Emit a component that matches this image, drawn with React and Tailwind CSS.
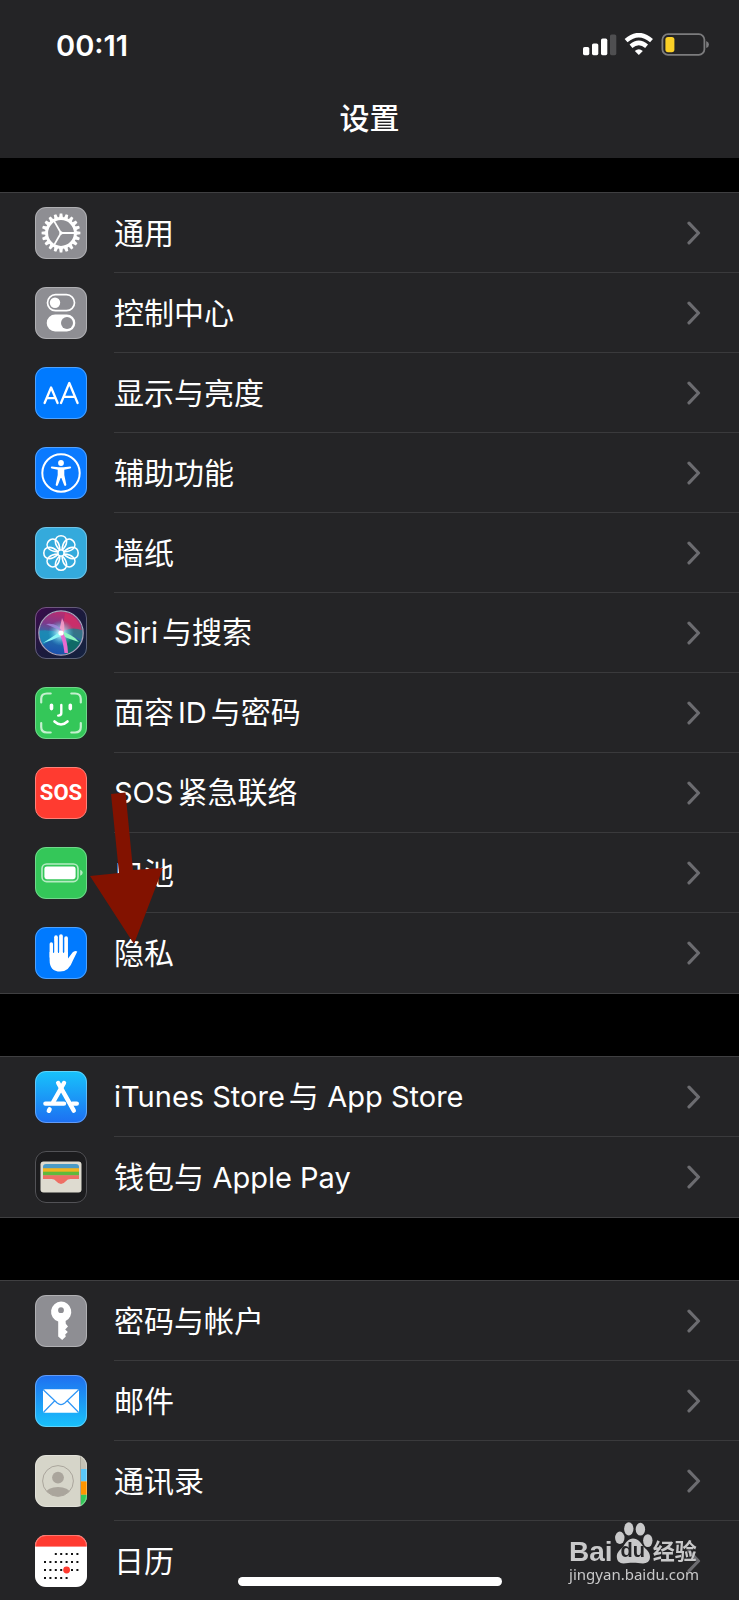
import React from "react";

const tile = "h-[52px] w-[52px] shrink-0";
const P = (a, r, cx = 26, cy = 26) => [
  +(cx + r * Math.cos((a * Math.PI) / 180)).toFixed(2),
  +(cy + r * Math.sin((a * Math.PI) / 180)).toFixed(2),
];

function Tile({ id, fill, stroke = "rgba(255,255,255,.3)", children }) {
  return (
    <svg viewBox="0 0 52 52" className={tile} aria-hidden="true">
      <defs>
        <clipPath id={`${id}-clip`}>
          <rect width="52" height="52" rx="11" />
        </clipPath>
      </defs>
      <g clipPath={`url(#${id}-clip)`}>
        <rect width="52" height="52" fill={fill} />
        {children}
      </g>
      <rect x=".5" y=".5" width="51" height="51" rx="10.5" fill="none" stroke={stroke} />
    </svg>
  );
}

function GearIcon() {
  const teeth = Array.from({ length: 20 }, (_, i) => i * 18);
  return (
    <Tile id="gear" fill="#8e8e93">
      <g fill="none" stroke="#fff">
        <circle cx="26" cy="26" r="14.4" strokeWidth="3" />
        {[0, 120, 240].map((a) => {
          const [x, y] = P(a, 14);
          return <line key={a} x1="26" y1="26" x2={x} y2={y} strokeWidth="1.8" />;
        })}
      </g>
      {teeth.map((a) => (
        <path key={a} d="M40 23.9 L45.4 24.7 V27.3 L40 28.1 Z" fill="#fff" transform={`rotate(${a} 26 26)`} />
      ))}
      <circle cx="26" cy="26" r="1.7" fill="#fff" />
    </Tile>
  );
}

function SwitchesIcon() {
  return (
    <Tile id="switches" fill="#8e8e93">
      <rect x="12.5" y="7.7" width="27" height="16" rx="8" fill="none" stroke="#fff" strokeWidth="1.7" />
      <circle cx="20" cy="15.7" r="5.2" fill="#fff" />
      <rect x="11.7" y="27.5" width="28.6" height="17" rx="8.5" fill="#fff" />
      <circle cx="32" cy="36" r="6" fill="#8e8e93" />
    </Tile>
  );
}

function DisplayIcon() {
  return (
    <Tile id="display" fill="#007aff">
      <g fill="none" stroke="#fff" strokeLinecap="round" strokeLinejoin="round" strokeWidth="2.3">
        <path d="M9.6 36 L16.1 20.5 L22.6 36 M11.8 31.2 H20.4" />
        <path d="M26 36 L34.3 16 L42.6 36 M28.8 29.8 H39.8" />
      </g>
    </Tile>
  );
}

function AccessibilityIcon() {
  return (
    <Tile id="access" fill="#0a7aff">
      <circle cx="26" cy="26" r="18.7" fill="none" stroke="#fff" strokeWidth="2" />
      <circle cx="26" cy="16" r="2.9" fill="#fff" />
      <path
        d="M17 19.6 C22 20.6 30 20.6 35 19.6 C36.4 19.5 36.6 21.3 35.3 21.6 L29.3 22.8 L29.3 28 L31.3 37.6 C31.5 39 29.6 39.5 29.1 38.1 L26.4 31 H25.6 L22.9 38.1 C22.4 39.5 20.5 39 20.7 37.6 L22.7 28 L22.7 22.8 L16.7 21.6 C15.4 21.3 15.6 19.5 17 19.6 Z"
        fill="#fff"
      />
    </Tile>
  );
}

function WallpaperIcon() {
  return (
    <Tile id="wallpaper" fill="#34aadc">
      <g fill="none" stroke="#fff" strokeWidth="1.6">
        {[0, 45, 90, 135, 180, 225, 270, 315].map((a) => (
          <path
            key={a}
            d="M26 8.8 C29.4 8.8 31.6 11.2 31.6 14.4 C31.6 17.6 29.6 20.6 27.4 23 H24.6 C22.4 20.6 20.4 17.6 20.4 14.4 C20.4 11.2 22.6 8.8 26 8.8 Z"
            transform={`rotate(${a} 26 26)`}
          />
        ))}
      </g>
      <circle cx="26" cy="26" r="2.2" fill="#34aadc" />
    </Tile>
  );
}

function SiriIcon() {
  return (
    <Tile id="siri" fill="url(#siri-bg)">
      <defs>
        <linearGradient id="siri-bg" x1="0" y1="0" x2="1" y2="1">
          <stop offset="0" stopColor="#3d0a4d" />
          <stop offset=".5" stopColor="#1b1a3c" />
          <stop offset="1" stopColor="#142340" />
        </linearGradient>
        <linearGradient id="siri-orb" x1=".6" y1="0" x2=".4" y2="1">
          <stop offset="0" stopColor="#c02a6c" />
          <stop offset=".35" stopColor="#7c3a8c" />
          <stop offset=".6" stopColor="#2470a8" />
          <stop offset="1" stopColor="#1a4fae" />
        </linearGradient>
        <radialGradient id="siri-glow">
          <stop offset="0" stopColor="#fff" />
          <stop offset=".3" stopColor="#b9f4ff" stopOpacity=".75" />
          <stop offset="1" stopColor="#38c8e8" stopOpacity="0" />
        </radialGradient>
        <clipPath id="siri-round">
          <circle cx="26" cy="26" r="22" />
        </clipPath>
        <filter id="siri-soft">
          <feGaussianBlur stdDeviation=".7" />
        </filter>
      </defs>
      <g clipPath="url(#siri-round)">
        <circle cx="26" cy="26" r="22" fill="url(#siri-orb)" />
        <g filter="url(#siri-soft)">
          <path d="M2 24 Q14 22 26 26 L8 38 Z" fill="#1c8fb8" opacity=".8" />
          <path d="M26 26 Q38 18 49 20 L49 34 Q38 28 26 26 Z" fill="#2a7c86" opacity=".8" />
          <path d="M27 25 L30 6 Q44 10 47 23 Q36 19 27 25 Z" fill="#d22f66" opacity=".85" />
          <path d="M27 27 Q38 31 46 34 Q40 46 31 48 Z" fill="#126a60" opacity=".9" />
          <circle cx="26" cy="26" r="13" fill="url(#siri-glow)" />
          <path d="M27 23.5 L8 36 Q18 33 28 28 Z" fill="#8df6f5" />
          <path d="M24 24 Q38 27 44 35 Q34 32 25 28 Z" fill="#8df5c0" />
          <path d="M25 27 Q28 34 29.5 46 L33 46 Q32.5 33 28 26 Z" fill="#e86ad0" />
          <path d="M23.5 27 L27 11 Q31 18 28.5 26 Z" fill="#ff9fca" opacity=".85" />
          <path d="M11 17 Q22 15 28 25 Q18 20 11 17 Z" fill="#a48be0" opacity=".8" />
        </g>
        <circle cx="26" cy="26" r="2.6" fill="#fff" filter="url(#siri-soft)" />
      </g>
      <circle cx="26" cy="26" r="22.2" fill="none" stroke="#a9a5bd" strokeWidth="1.2" />
    </Tile>
  );
}

function FaceIcon() {
  return (
    <Tile id="face" fill="#34c759">
      <g fill="none" strokeLinecap="round">
        <path
          d="M6.2 15.5 V12 Q6.2 6.5 12 6.5 H15.7 M36.3 6.5 H40 Q45.8 6.5 45.8 12 V15.5 M45.8 36 V40 Q45.8 45.5 40 45.5 H36.3 M15.7 45.5 H12 Q6.2 45.5 6.2 40 V36"
          stroke="#c4f0cf"
          strokeWidth="2.2"
        />
        <path d="M16.5 18.2 V21.6 M35.3 18.2 V21.6" stroke="#fff" strokeWidth="3.6" />
        <path d="M26.3 18 V26 Q26.3 28.6 23.2 28.6" stroke="#fff" strokeWidth="2.4" />
        <path d="M19.5 34.5 Q26 40.5 32.5 34.5" stroke="#fff" strokeWidth="2.6" />
      </g>
    </Tile>
  );
}

function SosIcon() {
  return (
    <span className="flex h-[52px] w-[52px] shrink-0 items-center justify-center rounded-[11px] border border-[#ff8078] bg-[#ff3b30] font-['Liberation_Sans_Narrow',_Roboto,_sans-serif] text-[22px] leading-none font-bold text-white">
      SOS
    </span>
  );
}

function BatteryTileIcon() {
  return (
    <Tile id="batt" fill="#34c759">
      <rect x="7" y="17" width="36" height="17.6" rx="4.6" fill="none" stroke="#b5ebc2" strokeWidth="1.6" />
      <rect x="9.4" y="19.4" width="31.2" height="12.8" rx="2.4" fill="#fff" />
      <path d="M45.2 22.8 Q47.7 23.6 47.7 25.8 Q47.7 28 45.2 28.8 Z" fill="#b5ebc2" />
    </Tile>
  );
}

function HandIcon() {
  return (
    <Tile id="hand" fill="#007aff">
      <g stroke="#fff" strokeLinecap="round" fill="none">
        <path d="M16.3 17 V30" strokeWidth="3.4" />
        <path d="M21 10.2 V28" strokeWidth="3.7" />
        <path d="M26 9 V28" strokeWidth="3.7" />
        <path d="M31.1 11 V28" strokeWidth="3.7" />
      </g>
      <path
        d="M14.6 25 L32.9 25 L33 31.5 L37.5 25.6 Q39.5 23.2 42.3 24.4 L38 33.2 Q34 44.6 25.2 44.6 Q14.6 44.6 14.6 33 Z"
        fill="#fff"
      />
      <path d="M18.6 14 V26 M23.5 13 V26 M28.6 13 V26" stroke="#007aff" strokeWidth=".9" />
    </Tile>
  );
}

function AppStoreIcon() {
  return (
    <Tile id="store" fill="url(#store-bg)">
      <defs>
        <linearGradient id="store-bg" x1="0" y1="0" x2="0" y2="1">
          <stop offset="0" stopColor="#18c3fb" />
          <stop offset="1" stopColor="#1d6ff2" />
        </linearGradient>
      </defs>
      <g stroke="#fff" strokeWidth="4.4" strokeLinecap="round" fill="none">
        <path d="M29 12 L18.2 31" />
        <path d="M23.2 12 L38.8 39.6" />
        <path d="M10.4 32.6 H29 M37.4 32.6 H41.8" />
        <path d="M14.6 38.4 L13.8 39.8" />
      </g>
    </Tile>
  );
}

function WalletIcon() {
  return (
    <Tile id="wallet" fill="#1c1c1e" stroke="#525256">
      <rect x="5.5" y="10.5" width="41" height="31" rx="3" fill="#dedbd0" />
      <path d="M8 16 Q8 13 11 13 H41 Q44 13 44 16 V18 H8 Z" fill="#4a9bc6" />
      <rect x="8" y="17.2" width="36" height="4" fill="#f2b41f" />
      <rect x="8" y="20.7" width="36" height="4" fill="#5fba3c" />
      <path d="M8 24.3 H44 V28 H35.5 Q32.5 28 30.8 30.2 Q28.5 33 26 33 Q23.5 33 21.2 30.2 Q19.5 28 16.5 28 H8 Z" fill="#ee6f65" />
    </Tile>
  );
}

function KeyIcon() {
  return (
    <Tile id="key" fill="#8e8e93">
      <path
        fillRule="evenodd"
        d="M26 6.5 A10.3 10.3 0 0 1 30.6 26 L30.8 28.7 L33 31.5 L30.2 34.4 L32.8 37 L30.2 39.6 L30.8 41.4 L27.2 45 L23.2 41.5 V26.6 A10.3 10.3 0 0 1 26 6.5 Z M26 12.3 A2.9 2.9 0 1 0 26 18.1 A2.9 2.9 0 1 0 26 12.3 Z"
        fill="#fff"
      />
    </Tile>
  );
}

function MailIcon() {
  return (
    <Tile id="mail" fill="url(#mail-bg)">
      <defs>
        <linearGradient id="mail-bg" x1="0" y1="0" x2="0" y2="1">
          <stop offset="0" stopColor="#1f6ff0" />
          <stop offset="1" stopColor="#19c2fb" />
        </linearGradient>
      </defs>
      <rect x="8" y="14.3" width="36" height="23.4" rx="2" fill="#fff" />
      <path d="M8.5 15 L22.2 28 Q26 31.2 29.8 28 L43.5 15 M8.8 37 L19.5 26 M43.2 37 L32.5 26" fill="none" stroke="#2d95f6" strokeWidth="1.2" />
    </Tile>
  );
}

function ContactsIcon() {
  return (
    <Tile id="contacts" fill="#d6d5c9">
      <defs>
        <clipPath id="contact-round">
          <circle cx="23" cy="26" r="15.2" />
        </clipPath>
      </defs>
      <rect x="46" y="0" width="6" height="14" fill="#c5c3b6" />
      <rect x="46" y="14" width="6" height="12.4" fill="#5ac8fa" />
      <rect x="46" y="26.4" width="6" height="13.4" fill="#ff9500" />
      <rect x="46" y="39.8" width="6" height="13" fill="#34c759" />
      <rect x="45" y="0" width="1" height="52" fill="#aaa89c" />
      <g clipPath="url(#contact-round)" fill="#aaa59c">
        <circle cx="23" cy="22.6" r="5.9" />
        <ellipse cx="23" cy="38" rx="12" ry="6" />
      </g>
      <circle cx="23" cy="26" r="15.4" fill="none" stroke="#aaa59c" strokeWidth="1" />
    </Tile>
  );
}

function CalendarIcon() {
  const rows = [
    [2, 6],
    [0, 6],
    [0, 6],
    [0, 4],
  ];
  return (
    <Tile id="calendar" fill="#fff">
      <rect width="52" height="11.6" fill="#ff3b30" />
      {rows.map(([from, to], r) =>
        Array.from({ length: to - from + 1 }, (_, i) => (
          <rect key={`${r}-${i}`} x={9 + (from + i) * 5.4} y={18 + r * 8} width="2" height="2" fill="#111" />
        ))
      )}
      <circle cx="31.6" cy="35" r="3.4" fill="#ff3b30" />
    </Tile>
  );
}

function Chevron() {
  return (
    <svg viewBox="0 0 14 24" className="h-6 w-[14px] shrink-0" fill="none" aria-hidden="true">
      <path d="M2 2.2 L11.5 12 L2 21.8" stroke="#6c6c70" strokeWidth="3.2" strokeLinecap="round" strokeLinejoin="round" />
    </svg>
  );
}

const groups = [
  [
    [GearIcon, "通用"],
    [SwitchesIcon, "控制中心"],
    [DisplayIcon, "显示与亮度"],
    [AccessibilityIcon, "辅助功能"],
    [WallpaperIcon, "墙纸"],
    [SiriIcon, "Siri与搜索"],
    [FaceIcon, "面容ID与密码"],
    [SosIcon, "SOS紧急联络"],
    [BatteryTileIcon, "电池"],
    [HandIcon, "隐私"],
  ],
  [
    [AppStoreIcon, "iTunes Store与 App Store"],
    [WalletIcon, "钱包与 Apple Pay"],
  ],
  [
    [KeyIcon, "密码与帐户"],
    [MailIcon, "邮件"],
    [ContactsIcon, "通讯录"],
    [CalendarIcon, "日历"],
  ],
];

// Latin runs are set a step smaller and kept apart from the Chinese characters beside them.
function Label({ text }) {
  const parts = text.split(/([A-Za-z][A-Za-z ]*)/).filter(Boolean);
  return (
    <span className="truncate text-[30px] leading-10">
      {parts.map((part, i) =>
        /[A-Za-z]/.test(part) ? (
          <span key={i} className={`text-[29px] ${i > 0 && !parts[i - 1].endsWith(" ") ? "ml-1" : ""} ${i < parts.length - 1 ? "mr-1" : ""}`}>
            {part}
          </span>
        ) : (
          part
        )
      )}
    </span>
  );
}

function Row({ Icon, label, last }) {
  return (
    <li>
      <a href="#" className="flex h-20 items-stretch gap-[27px] pl-[35px]">
        <span className="flex items-center">
          <Icon />
        </span>
        <span className={`flex min-w-0 flex-1 items-center justify-between pr-[38px] ${last ? "" : "border-b border-[#3a3a3c]"}`}>
          <Label text={label} />
          <Chevron />
        </span>
      </a>
    </li>
  );
}

function StatusBar() {
  return (
    <div className="flex h-[90px] items-center justify-between pr-[30px] pl-14">
      <time className="text-[29px] leading-none font-semibold">00:11</time>
      <svg viewBox="0 0 126 24" className="h-6 w-[126px]" aria-hidden="true">
        <g fill="#fff">
          <rect x="0" y="14" width="6.3" height="8.2" rx="1.6" />
          <rect x="9" y="10.4" width="6.3" height="11.8" rx="1.6" />
          <rect x="18" y="5.6" width="6.3" height="16.6" rx="1.6" />
          <rect x="27" y="1.4" width="6.3" height="20.8" rx="1.6" fill="#4f4f51" />
        </g>
        <g fill="none" stroke="#fff" strokeWidth="4.4">
          <path d="M43.1 7.6 Q55.8 -3.4 68.5 7.6" />
          <path d="M48 13.2 Q55.8 6.6 63.6 13.2" />
        </g>
        <path d="M55.8 22 L51.8 18 Q55.8 14.6 59.8 18 Z" fill="#fff" />
        <rect x="79.4" y="1.2" width="42" height="20.6" rx="5.6" fill="none" stroke="#7c7c7e" strokeWidth="1.8" />
        <rect x="82.4" y="4" width="9" height="15.2" rx="2.6" fill="#fbd026" />
        <path d="M123.2 8 Q126 9 126 11.5 Q126 14 123.2 15 Z" fill="#7c7c7e" />
      </svg>
    </div>
  );
}

function Watermark() {
  return (
    <div className="fixed right-10 bottom-4 flex flex-col items-start text-[#c9c9ca]">
      <div className="flex items-end font-['Liberation_Sans',_'Noto_Sans_CJK_SC',_sans-serif] leading-none font-bold">
        <span className="text-[28px] leading-6">Bai</span>
        <span className="relative">
          <svg viewBox="0 0 40 42" className="h-[42px] w-10" fill="#c9c9ca" aria-hidden="true">
            <ellipse cx="6.8" cy="15.8" rx="4.7" ry="6.2" />
            <ellipse cx="15.8" cy="6.8" rx="4.7" ry="6.6" />
            <ellipse cx="27.4" cy="7.2" rx="4.7" ry="6.4" />
            <ellipse cx="34.8" cy="18.6" rx="4.7" ry="6.4" />
            <path d="M20 16.6 C25 16.6 28 21 30 24 C33 27.5 37 29.5 37 35 C37 39.6 33.6 41.4 30 41.4 C26 41.4 24 40.8 20 40.8 C16 40.8 14 41.4 10.4 41.4 C6.6 41.4 3.8 39.2 3.8 34.6 C3.8 29.5 8 27.5 10.6 24 C13 20.5 15.4 16.6 20 16.6 Z" />
          </svg>
          <span className="absolute bottom-1 left-0 w-full text-center text-[20px] leading-none text-[#242426]">du</span>
        </span>
        <span className="text-[22px] leading-6">经验</span>
      </div>
      <span className="font-['Noto_Sans',_sans-serif] text-[15px] leading-5">jingyan.baidu.com</span>
    </div>
  );
}

export default function App() {
  return (
    <div className="relative h-screen overflow-hidden bg-black font-['Inter',_'Noto_Sans_CJK_SC',_sans-serif] text-white" lang="zh-CN">
      <header className="bg-[#242426]">
        <StatusBar />
        <h1 className="pt-2 pb-5 text-center text-[30px] leading-10 font-medium">设置</h1>
      </header>
      <main className="flex flex-col gap-[62px] pt-[34px]">
        {groups.map((rows, g) => (
          <ul key={g} className="border-y border-[#3f3f41] bg-[#242426]">
            {rows.map(([Icon, label], i) => (
              <Row key={label} Icon={Icon} label={label} last={i === rows.length - 1} />
            ))}
          </ul>
        ))}
      </main>
      <svg viewBox="0 0 74 152" className="absolute top-[792px] left-[90px] h-[152px] w-[74px]" fill="#821200" aria-hidden="true">
        <path d="M21 2 L35.5 0.5 L43 78 L73 76 L44 152 L0 84 L29 81 Z" />
      </svg>
      <Watermark />
      <div className="fixed inset-x-0 bottom-[14px] mx-auto h-[9px] w-[264px] rounded-full bg-white" />
    </div>
  );
}
